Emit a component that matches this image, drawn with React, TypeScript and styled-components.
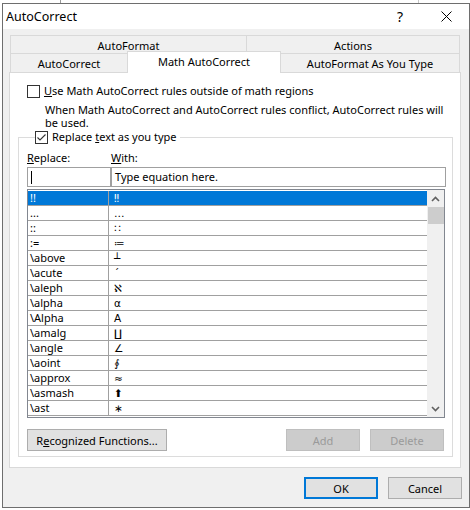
import { FC } from "react";
import styled, { createGlobalStyle } from "styled-components";

const ui = {
  font: `"Noto Sans", "Open Sans", "Liberation Sans", sans-serif`,
  face: "#f0f0f0",
  tabLine: "#d9d9d9",
  frame: "#6e6e6e",
  field: "#a0a0a0",
  blue: "#0078d7",
  button: "#e1e1e1",
  buttonLine: "#adadad",
};

const GlobalStyle = createGlobalStyle`
  body {
    margin: 0;
    background: #ffffff;
    font-family: ${ui.font};
    font-size: 11px;
    color: #000000;
  }
`;

const Backdrop = styled.div`
  display: flex;
  height: 3px;
`;

const BackdropLine = styled.span<{ $left: number; $color: string }>`
  width: 1px;
  height: 3px;
  margin-left: ${(p) => p.$left}px;
  background: ${(p) => p.$color};
`;

const Dialog = styled.div`
  width: 468px;
  height: 505px;
  margin-left: 2px;
  box-sizing: border-box;
  border: 1px solid ${ui.frame};
  background: ${ui.face};
  display: flex;
  flex-direction: column;
`;

const TitleBar = styled.div`
  height: 25px;
  background: #ffffff;
  display: flex;
  align-items: center;
  padding-left: 3px;
`;

const Title = styled.div`
  flex: 1;
  font-size: 12.5px;
  line-height: 25px;
`;

const TitleButton = styled.div<{ $w: number }>`
  width: ${(p) => p.$w}px;
  height: 25px;
  display: flex;
  align-items: center;
  justify-content: center;
  font-size: 14px;
`;

const Body = styled.div`
  padding: 6px 8px 0 6px;
`;

const TabRow = styled.div`
  display: flex;
  margin: 0 1px;
`;

const Tab = styled.div<{ $w: number; $active?: boolean; $tall?: boolean }>`
  position: relative;
  box-sizing: border-box;
  width: ${(p) => p.$w}px;
  height: ${(p) => (p.$active ? 22 : p.$tall ? 19 : 18)}px;
  margin-top: ${(p) => (p.$active ? -2 : 0)}px;
  margin-bottom: ${(p) => (p.$active ? -1 : 0)}px;
  z-index: ${(p) => (p.$active ? 1 : 0)};
  border: 1px solid ${ui.tabLine};
  border-bottom: none;
  background: ${(p) => (p.$active ? "#ffffff" : ui.face)};
  display: flex;
  align-items: center;
  justify-content: center;
  padding-top: ${(p) => (p.$active ? 0 : 1)}px;
  padding-bottom: ${(p) => (p.$active ? 3 : 0)}px;
  & + & {
    margin-left: -1px;
  }
`;

const Panel = styled.div`
  box-sizing: border-box;
  width: 452px;
  height: 396px;
  border: 1px solid ${ui.tabLine};
  background: #ffffff;
  padding: 11px 7px 0 8px;
`;

const CheckRow = styled.label<{ $indent: number }>`
  display: flex;
  align-items: center;
  gap: 4px;
  height: 14px;
  margin-left: ${(p) => p.$indent}px;
  line-height: 14px;
  white-space: nowrap;
`;

const Box = styled.span`
  box-sizing: border-box;
  width: 13px;
  height: 13px;
  border: 1px solid #333333;
  background: #ffffff;
  display: flex;
`;

const Note = styled.p`
  margin: 5px 0 0 27px;
  line-height: 13px;
`;

const Group = styled.fieldset`
  margin: 1px 0 0 0;
  padding: 6px 6px 5px 8px;
  border: 1px solid #dcdcdc;
  min-width: 0;
`;

const Legend = styled.legend`
  margin-left: 8px;
  padding: 0 3px 0 0;
  background: #ffffff;
`;

const Labels = styled.div`
  display: grid;
  grid-template-columns: 84px 1fr;
  height: 14px;
  line-height: 14px;
  margin-top: 1px;
`;

const InputRow = styled.div`
  display: grid;
  grid-template-columns: 84px 1fr;
  margin-top: 2px;
  width: 419px;
`;

const Input = styled.div`
  box-sizing: border-box;
  height: 20px;
  border: 1px solid ${ui.field};
  background: #ffffff;
  padding-left: 3px;
  line-height: 18px;
  & + & {
    border-left: 2px solid ${ui.field};
    margin-left: -1px;
  }
`;

const Caret = styled.span`
  display: inline-block;
  width: 1px;
  height: 13px;
  vertical-align: -3px;
  background: #000000;
`;

const List = styled.div`
  box-sizing: border-box;
  width: 418px;
  height: 229px;
  margin-top: 2px;
  border: 1px solid #828790;
  padding: 1px 0 0 0;
  display: flex;
`;

const Rows = styled.div`
  flex: 1;
`;

const Row = styled.div<{ $selected?: boolean }>`
  display: grid;
  grid-template-columns: 81px 1fr;
  height: 15px;
  box-sizing: border-box;
  border-bottom: 1px solid ${ui.field};
  background: ${(p) => (p.$selected ? ui.blue : "#ffffff")};
  color: ${(p) => (p.$selected ? "#ffffff" : "#000000")};
  line-height: 14px;
`;

const Cell = styled.div<{ $symbol?: boolean }>`
  padding-left: ${(p) => (p.$symbol ? 5 : 2)}px;
  white-space: nowrap;
  font-family: ${(p) => (p.$symbol ? `"DejaVu Sans", ${ui.font}` : ui.font)};
  font-size: ${(p) => (p.$symbol ? 10.5 : 11)}px;
  &:first-child {
    border-right: 1px solid ${ui.field};
  }
`;

const ScrollBar = styled.div`
  width: 17px;
  margin-top: -1px;
  background: ${ui.face};
  display: flex;
  flex-direction: column;
  align-items: center;
`;

const Arrow = styled.div`
  width: 17px;
  height: 17px;
  display: flex;
  align-items: center;
  justify-content: center;
`;

const Thumb = styled.div`
  width: 16px;
  height: 17px;
  background: #cdcdcd;
`;

const Track = styled.div`
  flex: 1;
`;

const ButtonRow = styled.div`
  display: flex;
  gap: 10px;
  margin-top: 11px;
  width: 417px;
`;

const Spacer = styled.div`
  flex: 1;
`;

const Button = styled.button<{ $w: number; $variant?: "primary" | "disabled" }>`
  box-sizing: border-box;
  width: ${(p) => p.$w}px;
  height: 22px;
  font-family: ${ui.font};
  font-size: 11px;
  padding: 0;
  background: ${(p) => (p.$variant === "disabled" ? "#cccccc" : ui.button)};
  color: ${(p) => (p.$variant === "disabled" ? "#9a9a9a" : "#000000")};
  border: ${(p) =>
    p.$variant === "primary"
      ? `2px solid ${ui.blue}`
      : p.$variant === "disabled"
        ? "1px solid #bfbfbf"
        : `1px solid ${ui.buttonLine}`};
`;

const Footer = styled.div`
  display: flex;
  justify-content: flex-end;
  gap: 10px;
  padding: 9px 7px 0 0;
`;

const rows: [string, string][] = [
  ["!!", "‼"],
  ["...", "…"],
  ["::", "∷"],
  [":=", "≔"],
  ["\\above", "┴"],
  ["\\acute", "´"],
  ["\\aleph", "ℵ"],
  ["\\alpha", "α"],
  ["\\Alpha", "Α"],
  ["\\amalg", "∐"],
  ["\\angle", "∠"],
  ["\\aoint", "∮"],
  ["\\approx", "≈"],
  ["\\asmash", "⬆"],
  ["\\ast", "∗"],
];

const CheckBox: FC<{ checked?: boolean }> = ({ checked }) => (
  <Box>
    {checked && (
      <svg width="11" height="11" viewBox="0 0 11 11">
        <path d="M1.5 5.5 L4 8 L9.5 2.5" fill="none" stroke="#333" strokeWidth="1.1" />
      </svg>
    )}
  </Box>
);

const Chevron: FC<{ down?: boolean }> = ({ down }) => (
  <svg width="9" height="6" viewBox="0 0 9 6">
    <path
      d={down ? "M1 1 L4.5 4.5 L8 1" : "M1 5 L4.5 1.5 L8 5"}
      fill="none"
      stroke="#606060"
      strokeWidth="1.6"
    />
  </svg>
);

const App: FC = () => {
  return (
    <>
      <GlobalStyle />
      <Backdrop>
        <BackdropLine $left={60} $color="#9a9a9a" />
        <BackdropLine $left={357} $color="#c8c8c8" />
      </Backdrop>
      <Dialog>
        <TitleBar>
          <Title>AutoCorrect</Title>
          <TitleButton $w={46}>?</TitleButton>
          <TitleButton $w={46}>
            <svg width="11" height="11" viewBox="0 0 11 11">
              <path d="M0.5 0.5 L10.5 10.5 M10.5 0.5 L0.5 10.5" stroke="#000" strokeWidth="1" />
            </svg>
          </TitleButton>
        </TitleBar>
        <Body>
          <TabRow>
            <Tab $w={237}>AutoFormat</Tab>
            <Tab $w={214}>Actions</Tab>
          </TabRow>
          <TabRow>
            <Tab $w={118} $tall>
              AutoCorrect
            </Tab>
            <Tab $w={154} $active>
              Math AutoCorrect
            </Tab>
            <Tab $w={180} $tall>
              AutoFormat As You Type
            </Tab>
          </TabRow>
          <Panel>
            <CheckRow $indent={9}>
              <CheckBox />
              <span>
                <u>U</u>se Math AutoCorrect rules outside of math regions
              </span>
            </CheckRow>
            <Note>
              When Math AutoCorrect and AutoCorrect rules conflict, AutoCorrect rules will
              <br />
              be used.
            </Note>
            <Group>
              <Legend>
                <CheckRow $indent={0}>
                  <CheckBox checked />
                  <span>
                    Replace <u>t</u>ext as you type
                  </span>
                </CheckRow>
              </Legend>
              <Labels>
                <span>
                  <u>R</u>eplace:
                </span>
                <span>
                  <u>W</u>ith:
                </span>
              </Labels>
              <InputRow>
                <Input>
                  <Caret />
                </Input>
                <Input>Type equation here.</Input>
              </InputRow>
              <List>
                <Rows>
                  {rows.map(([key, value], i) => (
                    <Row key={key} $selected={i === 0}>
                      <Cell>{key}</Cell>
                      <Cell $symbol>{value}</Cell>
                    </Row>
                  ))}
                </Rows>
                <ScrollBar>
                  <Arrow>
                    <Chevron />
                  </Arrow>
                  <Thumb />
                  <Track />
                  <Arrow>
                    <Chevron down />
                  </Arrow>
                </ScrollBar>
              </List>
              <ButtonRow>
                <Button $w={140}>
                  R<u>e</u>cognized Functions...
                </Button>
                <Spacer />
                <Button $w={74} $variant="disabled">
                  Add
                </Button>
                <Button $w={74} $variant="disabled">
                  Delete
                </Button>
              </ButtonRow>
            </Group>
          </Panel>
        </Body>
        <Footer>
          <Button $w={74} $variant="primary">
            OK
          </Button>
          <Button $w={74}>Cancel</Button>
        </Footer>
      </Dialog>
    </>
  );
};

export default App;
